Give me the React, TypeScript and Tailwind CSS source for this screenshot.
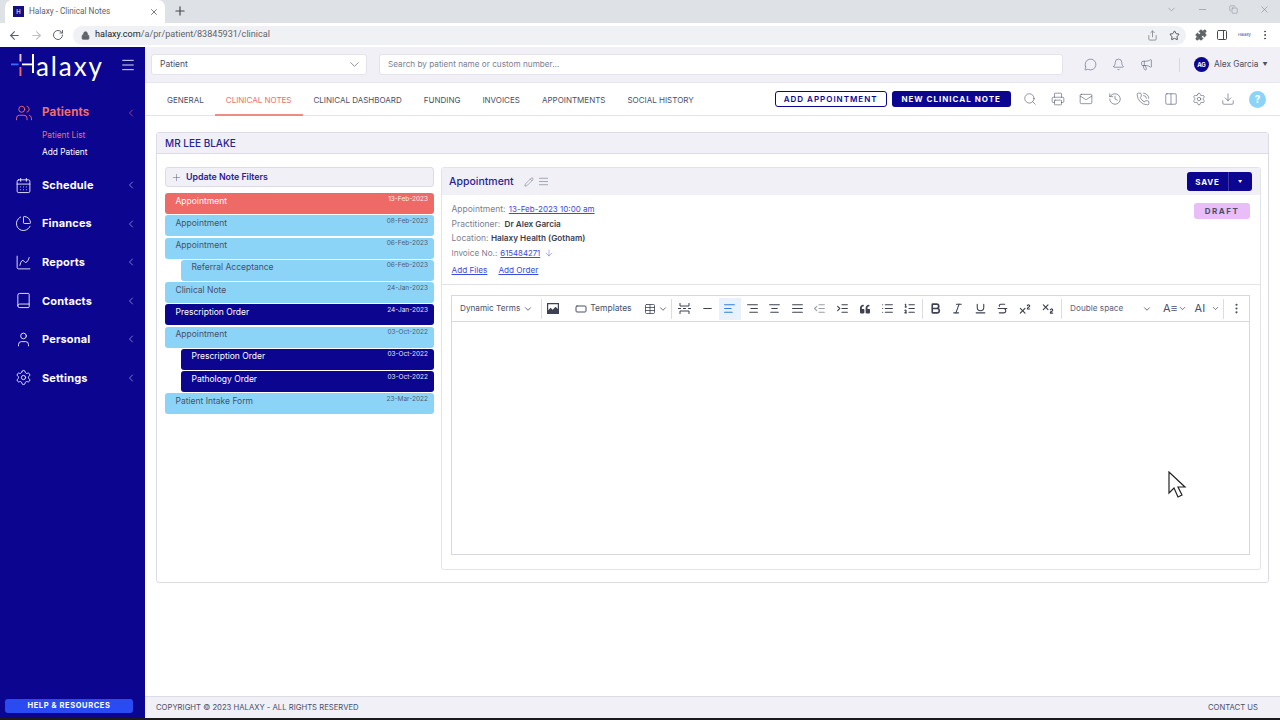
import React from 'react';
import { FaQuoteLeft } from 'react-icons/fa';
import {
  AlignCenter, AlignJustify, AlignLeft, AlignRight, ArrowDown, ArrowLeft, ArrowRight, Bell, Bold, Book,
  CalendarDays, ChevronDown, ChevronLeft, Copy, Download, IndentDecrease, IndentIncrease, Italic, List, ListOrdered,
  Lock, Mail, Megaphone, Menu, MessageCircle, Minus, MoreVertical, PanelRight, Pencil, PhoneCall, PieChart, Plus,
  Printer, Puzzle, RotateCw, Search, Settings, Share, Star, Strikethrough, Subscript, Superscript,
  Table, Underline, User, Users, X, AlignJustify as Lines, History, Columns2, ChartSpline, RectangleHorizontal,
} from 'lucide-react';

const navItems = [
  { label: 'Schedule', icon: CalendarDays },
  { label: 'Finances', icon: PieChart },
  { label: 'Reports', icon: ChartSpline },
  { label: 'Contacts', icon: Book },
  { label: 'Personal', icon: User },
  { label: 'Settings', icon: Settings },
];

const tabs = ['GENERAL', 'CLINICAL NOTES', 'CLINICAL DASHBOARD', 'FUNDING', 'INVOICES', 'APPOINTMENTS', 'SOCIAL HISTORY'];

type Note = { title: string; date: string; kind: 'red' | 'blue' | 'navy'; child?: boolean };

const notes: Note[] = [
  { title: 'Appointment', date: '13-Feb-2023', kind: 'red' },
  { title: 'Appointment', date: '08-Feb-2023', kind: 'blue' },
  { title: 'Appointment', date: '06-Feb-2023', kind: 'blue' },
  { title: 'Referral Acceptance', date: '06-Feb-2023', kind: 'blue', child: true },
  { title: 'Clinical Note', date: '24-Jan-2023', kind: 'blue' },
  { title: 'Prescription Order', date: '24-Jan-2023', kind: 'navy' },
  { title: 'Appointment', date: '03-Oct-2022', kind: 'blue' },
  { title: 'Prescription Order', date: '03-Oct-2022', kind: 'navy', child: true },
  { title: 'Pathology Order', date: '03-Oct-2022', kind: 'navy', child: true },
  { title: 'Patient Intake Form', date: '23-Mar-2022', kind: 'blue' },
];

const noteColors = {
  red: 'bg-[#ed6a66] text-white',
  blue: 'bg-[#8bd4f7] text-[#4a4f68]',
  navy: 'bg-[#0c0590] text-white',
};

// H of the logo is the coloured cross plus a white stem, the rest is text
const Logo = () => (
  <div className="flex items-end h-[26px]">
    <svg width="25" height="25" viewBox="0 0 25 25" fill="none">
      <rect x="0" y="10.5" width="7.5" height="1.8" fill="#3d6bff" />
      <rect x="8.5" y="1" width="1.9" height="7.5" fill="#e9c6f7" />
      <rect x="8.5" y="14" width="1.9" height="9" fill="#ed6a66" />
      <rect x="11" y="10.5" width="11" height="1.8" fill="#ffffff" />
      <rect x="21" y="1" width="2" height="19" fill="#ffffff" />
    </svg>
    <span className="text-white text-[26px] leading-[26px] font-['Lato'] tracking-[1.9px] -mb-[1px]">alaxy</span>
  </div>
);

function ToolIcon({ children, active }: { children: React.ReactNode; active?: boolean }) {
  return (
    <div className={`w-[22.5px] h-[22px] flex items-center justify-center ${active ? 'bg-[#e8f2fc] text-[#2f7fe0]' : 'text-[#3d4152]'}`}>
      {children}
    </div>
  );
}

const Divider = () => <div className="w-px h-[20px] bg-[#dcdce6]" />;

export default function App() {
  return (
    <div className="relative w-[1280px] h-[720px] flex flex-col overflow-hidden bg-white font-['Inter',sans-serif] text-[#4a4f68]">
      {/* browser tab strip */}
      <div className="h-[23px] bg-[#dee1e6] flex items-end">
        <div className="ml-[5px] w-[160px] h-[23px] bg-white rounded-t-[7px] flex items-center pl-[8px] pr-[6px]">
          <div className="w-[11px] h-[11px] bg-[#14107e] flex items-center justify-center text-white text-[6px] leading-none">H</div>
          <span className="ml-[5px] text-[8.2px] text-[#5f6368] font-['Roboto',sans-serif] flex-1">Halaxy - Clinical Notes</span>
          <X size={10} className="text-[#5f6368]" />
        </div>
        <Plus size={14} className="text-[#45494e] ml-[8px] mb-[5px]" />
        <div className="ml-auto flex items-center gap-[20px] pr-[10px] mb-[8px] text-[#7c8086]">
          <ChevronDown size={11} strokeWidth={1.2} />
          <Minus size={11} strokeWidth={1.2} />
          <Copy size={9} strokeWidth={1.2} className="mx-[1px]" />
          <X size={11} strokeWidth={1.2} />
        </div>
      </div>
      {/* address bar */}
      <div className="h-[24px] bg-white flex items-center pl-[8px] pr-[9px]">
        <ArrowLeft size={13} className="text-[#5f6368]" />
        <ArrowRight size={13} className="text-[#bfc1c5] ml-[9px]" />
        <RotateCw size={12} className="text-[#5f6368] ml-[9px]" />
        <div className="ml-[9px] flex-1 h-[19px] rounded-full bg-[#eff1f5] flex items-center pl-[8px] pr-[6px]">
          <Lock size={9} className="text-[#5f6368]" fill="#5f6368" />
          <span className="ml-[5px] text-[9.1px] font-['Roboto',sans-serif] text-[#202124]">
            halaxy.com<span className="text-[#5f6368]">/a/pr/patient/83845931/clinical</span>
          </span>
          <Share size={11} className="ml-auto text-[#8a8d92]" />
          <Star size={11} className="ml-[11px] text-[#45494e]" />
        </div>
        <Puzzle size={12} className="ml-[9px] text-[#5f6368]" fill="#5f6368" />
        <PanelRight size={12} className="ml-[9px] text-[#45494e]" />
        <span className="ml-[10px] text-[4px] text-[#3b38a0] w-[14px]">Halaxy</span>
        <MoreVertical size={12} className="ml-[7px] text-[#45494e]" />
      </div>

      <div className="flex-1 flex min-h-0">
        {/* sidebar */}
        <aside className="w-[145px] bg-[#0c0590] flex flex-col text-white shrink-0">
          <div className="h-[33px] pl-[11px] pr-[9px] pt-[3px] flex items-center justify-between">
            <Logo />
            <Menu size={16} strokeWidth={1.3} />
          </div>
          <div className="mt-[23px] pl-[15px] pr-[8px] h-[20px] flex items-center text-[#ef6e6a]">
            <Users size={18} strokeWidth={1.2} />
            <span className="ml-[9px] text-[11.5px] font-bold tracking-[0.2px]">Patients</span>
            <ChevronLeft size={12} strokeWidth={1.2} className="ml-auto" />
          </div>
          <div className="pl-[42px] mt-[4px] text-[8.3px] leading-[17px]">
            <div className="text-[#ef6e6a]">Patient List</div>
            <div>Add Patient</div>
          </div>
          <div className="mt-[14px] flex flex-col gap-[18.6px]">
            {navItems.map((n) => {
              const Icon = n.icon;
              return (
                <div key={n.label} className="pl-[15px] pr-[8px] h-[20px] flex items-center">
                  <Icon size={17} strokeWidth={1.2} />
                  <span className="ml-[10px] text-[11px] font-bold tracking-[0.15px]">{n.label}</span>
                  <ChevronLeft size={12} strokeWidth={1.2} className="ml-auto text-[#c9c8ea]" />
                </div>
              );
            })}
          </div>
          <div className="mt-auto ml-[5px] w-[128px] mb-[5px] h-[14px] bg-[#2b4bf2] rounded-[3px] flex items-center justify-center text-[7.5px] font-bold tracking-[0.6px]">
            HELP &amp; RESOURCES
          </div>
        </aside>

        <main className="flex-1 flex flex-col min-w-0">
          {/* top search bar */}
          <div className="h-[36px] bg-[#f0f0f6] border-b border-[#e6e6ee] flex items-center pl-[6px]">
            <div className="w-[216px] h-[21px] bg-white rounded-[3px] border border-[#e3e3ec] flex items-center pl-[8px] pr-[4px] text-[8.5px]">
              Patient
              <ChevronDown size={15} strokeWidth={1} className="ml-auto" />
            </div>
            <div className="ml-[12px] w-[684px] h-[21px] bg-white rounded-[3px] border border-[#e3e3ec] flex items-center pl-[8px] text-[8.2px] text-[#7c8092]">
              Search by patient name or custom number...
            </div>
            <MessageCircle size={13} strokeWidth={1} className="ml-[21px]" />
            <Bell size={13} strokeWidth={1} className="ml-[15px]" />
            <Megaphone size={13} strokeWidth={1} className="ml-[15px]" />
            <div className="w-px h-[14px] bg-[#d8d8e2] ml-[26px]" />
            <div className="ml-[14px] w-[15px] h-[15px] rounded-full bg-[#0c0590] text-white text-[6px] font-bold flex items-center justify-center">AG</div>
            <span className="ml-[5px] text-[8.3px]">Alex Garcia</span>
            <span className="ml-[4px] text-[5px]">▼</span>
          </div>
          {/* patient tabs */}
          <div className="h-[33px] bg-white border-b border-[#e3e3ec] flex items-stretch pl-[11px]">
            {tabs.map((t, i) => (
              <div
                key={t}
                className={`px-[11px] pt-[3px] flex items-center text-[8px] border-b-2 ${i === 1 ? 'text-[#ef6e6a] border-[#f08a86] -mb-px' : 'border-transparent'}`}
              >
                {t}
              </div>
            ))}
            <div className="ml-auto pr-[14px] flex items-center">
              <div className="w-[112px] h-[16px] border border-[#0c0590] rounded-[3px] text-[#0c0590] text-[8px] font-semibold tracking-[1px] flex items-center justify-center">ADD APPOINTMENT</div>
              <div className="ml-[5px] w-[119px] h-[16px] bg-[#0c0590] rounded-[3px] text-white text-[8px] font-bold tracking-[1px] flex items-center justify-center">NEW CLINICAL NOTE</div>
              <Search size={14} strokeWidth={1} className="ml-[12px]" />
              <Printer size={14} strokeWidth={1} className="ml-[14.3px]" />
              <Mail size={14} strokeWidth={1} className="ml-[14.3px]" />
              <History size={14} strokeWidth={1} className="ml-[14.3px]" />
              <PhoneCall size={14} strokeWidth={1} className="ml-[14.3px]" />
              <Columns2 size={14} strokeWidth={1} className="ml-[14.3px]" />
              <Settings size={14} strokeWidth={1} className="ml-[14.3px]" />
              <Download size={14} strokeWidth={1} className="ml-[14.3px]" />
              <div className="ml-[14.3px] w-[17px] h-[17px] rounded-full bg-[#8bd4f7] text-white text-[10px] font-bold flex items-center justify-center">?</div>
            </div>
          </div>

          {/* page content */}
          <div className="flex-1 pl-[11px] pr-[11px] pt-[16px] min-h-0">
            <div className="h-[451px] border border-[#dcdce8] rounded-[3px] bg-white">
              <div className="h-[21px] bg-[#f0f0f6] border-b border-[#dcdce8] flex items-center pl-[8px] text-[10px] font-medium text-[#2a2290]">
                MR LEE BLAKE
              </div>
              <div className="flex pl-[8px] pr-[7px] pt-[13px] gap-[7px]">
                {/* note list */}
                <div className="w-[269px] shrink-0">
                  <div className="h-[20px] bg-[#f0f0f6] border border-[#dcdce8] rounded-[3px] flex items-center pl-[5px] text-[8.8px] font-semibold text-[#2a2290]">
                    <Plus size={11} strokeWidth={1} className="text-[#4a4f68]" />
                    <span className="ml-[4px]">Update Note Filters</span>
                  </div>
                  <div className="mt-[6px] flex flex-col gap-[1.25px]">
                    {notes.map((n, i) => (
                      <div
                        key={i}
                        className={`h-[21px] ${n.child ? 'ml-[16px]' : ''} pl-[10.5px] rounded-[3px] flex justify-between pr-[6px] pt-[1.5px] ${noteColors[n.kind]}`}
                      >
                        <span className="text-[8.5px] leading-[12px]">{n.title}</span>
                        <span className="text-[6.5px] leading-[9px] opacity-90">{n.date}</span>
                      </div>
                    ))}
                  </div>
                </div>
                {/* note editor */}
                <div className="flex-1 h-[403px] border border-[#e3e3ec] rounded-[3px]">
                  <div className="h-[27px] bg-[#f0f0f6] flex items-center pl-[7px] pr-[8px]">
                    <span className="text-[10.5px] font-medium text-[#2a2290]">Appointment</span>
                    <Pencil size={10} strokeWidth={1} className="ml-[10px]" />
                    <Lines size={11} strokeWidth={1} className="ml-[4px]" />
                    <div className="ml-auto flex h-[19px] w-[65px] bg-[#0c0590] rounded-[3px] text-white text-[8px] font-bold tracking-[0.8px]">
                      <div className="w-[42px] flex items-center justify-center border-r border-[#3d37a8]">SAVE</div>
                      <div className="flex-1 flex items-center justify-center text-[4px]">▼</div>
                    </div>
                  </div>
                  <div className="h-[90px] border-b border-[#e3e3ec] pl-[9.5px] pr-[10px] pt-[7px] relative text-[8.5px] leading-[14.6px]">
                    <div className="absolute right-[10px] top-[8px] w-[56px] h-[16px] bg-[#e9bdf7] rounded-[3px] text-[8px] font-bold tracking-[1.5px] flex items-center justify-center">DRAFT</div>
                    <div className="text-[#7c8092]">Appointment: <span className="ml-[1px] text-[8px] text-[#3a4be0] underline">13-Feb-2023 10:00 am</span></div>
                    <div className="text-[#7c8092]">Practitioner: <span className="ml-[2px] text-[8.2px] font-semibold text-[#3a3e50]">Dr Alex Garcia</span></div>
                    <div className="text-[#7c8092]">Location: <span className="text-[8.2px] font-semibold text-[#3a3e50]">Halaxy Health (Gotham)</span></div>
                    <div className="text-[#7c8092] text-[8.2px] flex items-center">Invoice No.: <span className="ml-[3px] text-[7.8px] text-[#3a4be0] underline">615484271</span><ArrowDown size={10} strokeWidth={1} className="ml-[4px] text-[#3a4be0]" /></div>
                    <div className="mt-[3px] text-[8.2px] text-[#3a4be0] underline flex gap-[11px]"><span>Add Files</span><span>Add Order</span></div>
                  </div>
                  {/* rich text box */}
                  <div className="ml-[9px] mr-[10px] mt-[10px] h-[260px] border border-[#d8d8e2]">
                    <div className="h-[26px] border-b border-[#d8d8e2] flex items-center pl-[8px] text-[8.5px]">
                      <span className="text-[8.2px]">Dynamic Terms</span>
                      <ChevronDown size={10} className="ml-[3px]" />
                      <div className="ml-[8px]"><Divider /></div>
                      <svg width="12" height="11" viewBox="0 0 12 11" className="ml-[5px] text-[#3d4152]" fill="currentColor">
                        <path d="M0 0h12v11H0zM1.2 1.2v6l2.4-2.4 2 2 3-3 2.2 2.2V1.2z" fillRule="evenodd" />
                      </svg>
                      <RectangleHorizontal size={12} className="ml-[16px]" />
                      <span className="ml-[3px]">Templates</span>
                      <Table size={12} strokeWidth={1.6} className="ml-[12px] text-[#3d4152]" />
                      <ChevronDown size={10} className="ml-[2px]" />
                      <div className="ml-[3px] mr-[2px]"><Divider /></div>
                      <ToolIcon><svg width="13" height="11" viewBox="0 0 13 11" fill="none" stroke="currentColor"><path d="M2 0v3h9V0M2 11V8h9v3M0 5.5h3M5 5.5h3M10 5.5h3" /></svg></ToolIcon>
                      <ToolIcon><Minus size={13} /></ToolIcon>
                      <ToolIcon active><AlignLeft size={13} /></ToolIcon>
                      <ToolIcon><AlignRight size={13} /></ToolIcon>
                      <ToolIcon><AlignCenter size={13} /></ToolIcon>
                      <ToolIcon><AlignJustify size={13} /></ToolIcon>
                      <ToolIcon><IndentDecrease size={13} className="text-[#9a9dab]" /></ToolIcon>
                      <ToolIcon><IndentIncrease size={13} /></ToolIcon>
                      <ToolIcon><FaQuoteLeft size={10} /></ToolIcon>
                      <ToolIcon><List size={13} /></ToolIcon>
                      <ToolIcon><ListOrdered size={13} /></ToolIcon>
                      <div className="mx-[1px]"><Divider /></div>
                      <ToolIcon><Bold size={13} strokeWidth={3} /></ToolIcon>
                      <ToolIcon><Italic size={13} /></ToolIcon>
                      <ToolIcon><Underline size={13} /></ToolIcon>
                      <ToolIcon><Strikethrough size={13} /></ToolIcon>
                      <ToolIcon><Superscript size={14} /></ToolIcon>
                      <ToolIcon><Subscript size={14} /></ToolIcon>
                      <div className="ml-[2px]"><Divider /></div>
                      <span className="ml-[8px] w-[72px] text-[8.2px] text-[#5b5f7e]">Double space</span>
                      <ChevronDown size={10} />
                      <span className="ml-[11px] w-[15px] text-[11px]">A≡</span>
                      <ChevronDown size={9} />
                      <span className="ml-[7.5px] w-[16px] text-[11px]">AI</span>
                      <ChevronDown size={9} />
                      <div className="ml-[3px]"><Divider /></div>
                      <MoreVertical size={13} className="ml-[6px]" />
                    </div>
                  </div>
                </div>
              </div>
            </div>
          </div>

          {/* footer */}
          <div className="h-[22px] bg-[#f0f0f6] border-t border-[#dcdce8] flex items-center justify-between pl-[11px] pr-[22px] text-[7.7px]">
            <span>COPYRIGHT © 2023 HALAXY - ALL RIGHTS RESERVED</span>
            <span>CONTACT US</span>
          </div>
        </main>
      </div>
      <div className="h-[2px] bg-[#1a1a1a] shrink-0" />

      {/* mouse cursor in the recording */}
      <svg className="absolute left-[1168px] top-[471px]" width="20" height="28" viewBox="0 0 20 28" fill="white" stroke="#222" strokeWidth="1.2">
        <path d="M1 1v21l5-5 4 9 4-2-4-8h7z" />
      </svg>
    </div>
  );
}
